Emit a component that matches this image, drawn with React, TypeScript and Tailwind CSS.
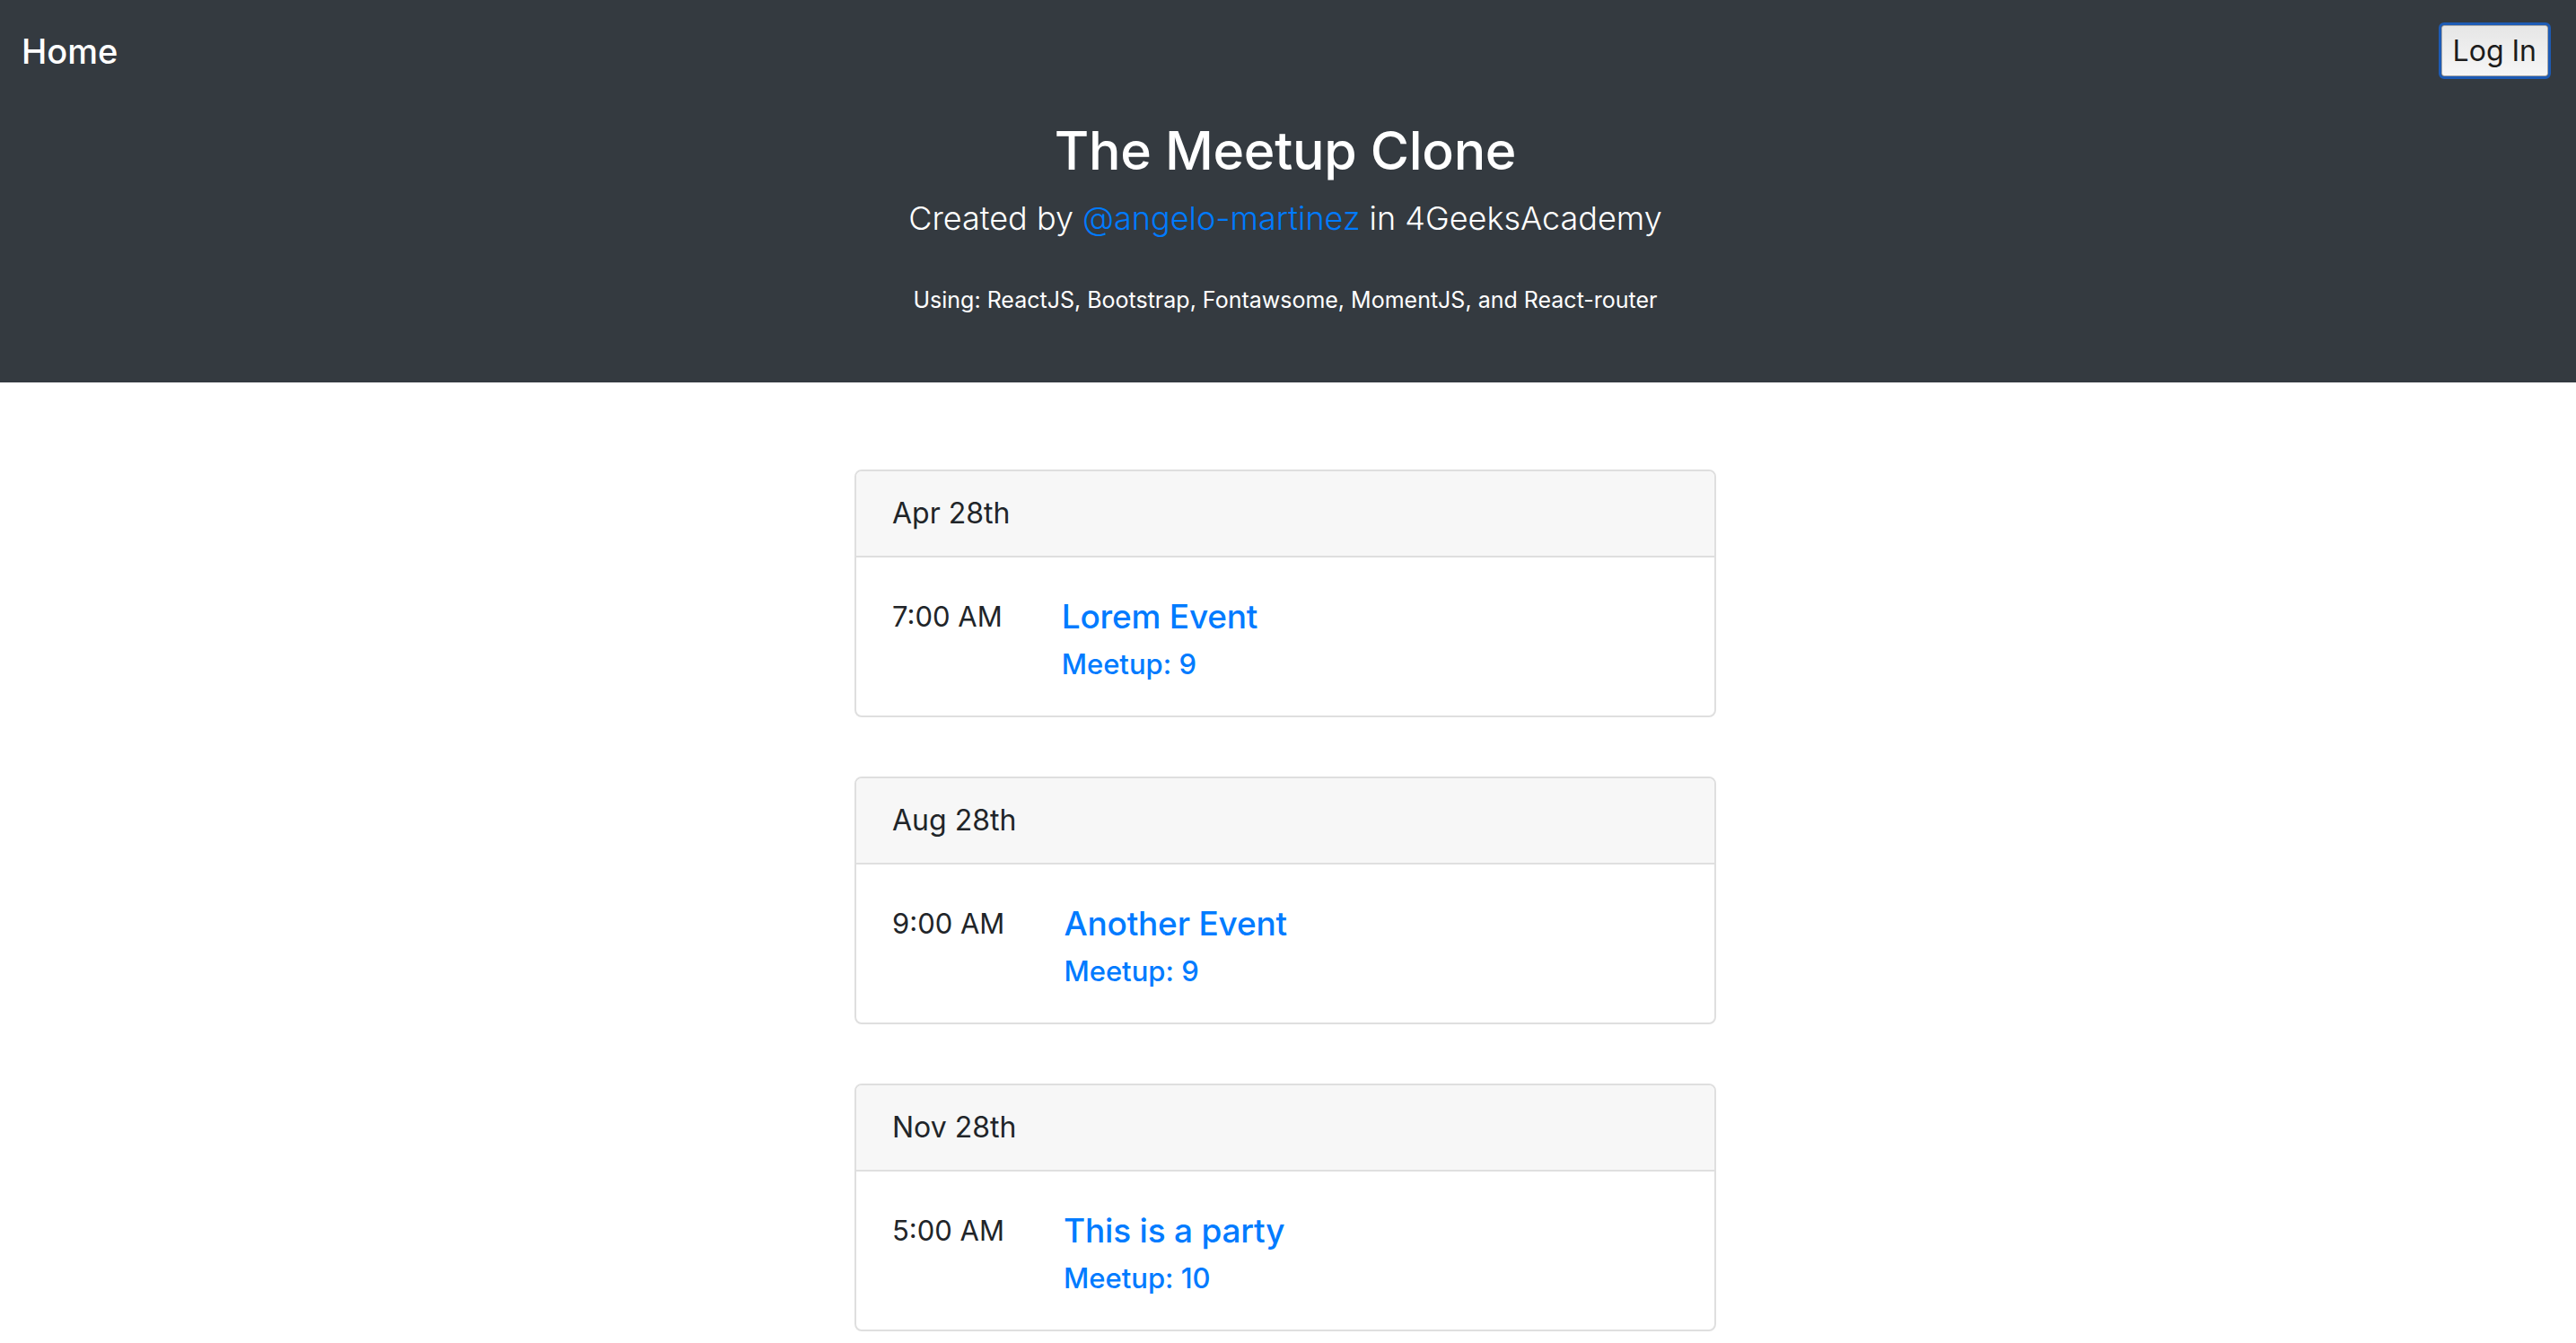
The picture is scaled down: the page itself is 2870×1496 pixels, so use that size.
import React from "react";

const events = [
  { id: 1, date: "Apr 28th", time: "7:00 AM", title: "Lorem Event", meetup: 9 },
  { id: 2, date: "Aug 28th", time: "9:00 AM", title: "Another Event", meetup: 9 },
  { id: 3, date: "Nov 28th", time: "5:00 AM", title: "This is a party", meetup: 10 },
];

function EventCard({ date, time, title, meetup }: { date: string; time: string; title: string; meetup: number }) {
  return (
    <div className="w-[960px] rounded-[8px] border-2 border-[#dfdfdf] bg-white overflow-hidden">
      <div className="border-b-2 border-[#dfdfdf] bg-[#f7f7f7] px-[40px] py-[23px] text-[32px] leading-[48px] text-[#212529]">
        {date}
      </div>
      <div className="flex px-[40px] pt-[42px] pb-[38px]">
        <div className="mr-[66px] text-[31px] leading-[48px] text-[#212529]">{time}</div>
        <div className="flex flex-col">
          <a href="#" className="mb-[10px] text-[37px] font-medium leading-[48px] tracking-[-0.2px] text-[#007bff]">
            {title}
          </a>
          <a href="#" className="text-[31px] font-medium leading-[38px] text-[#007bff]">
            Meetup: {meetup}
          </a>
        </div>
      </div>
    </div>
  );
}

export default function App() {
  return (
    <div className="min-h-screen bg-white font-['Inter','Liberation_Sans',sans-serif]">
      <header className="h-[426px] bg-[#343a40] text-white">
        <nav className="flex items-center justify-between pl-[24px] pr-[28px] pt-[25px]">
          <a href="#" className="text-[38px] font-medium leading-[56px] text-white">
            Home
          </a>
          <button className="rounded-[6px] border-[3px] border-[#1d5bb5] p-0">
            <span className="block rounded-[3px] border border-[#a7a7a7] bg-gradient-to-b from-[#e6e6e6] to-[#f6f6f6] px-[12px] text-[32px] leading-[55px] text-[#1c1c1c]">
              Log In
            </span>
          </button>
        </nav>
        <div className="flex flex-col items-center pr-[6px]">
          <h1 className="mt-[41px] text-[59px] font-medium leading-[77px] tracking-[-0.3px]">The Meetup Clone</h1>
          <p className="mt-[10px] text-[36px] font-light leading-[54px]">
            Created by <a href="#" className="text-[#007bff]">@angelo-martinez</a> in 4GeeksAcademy
          </p>
          <p className="mt-[46px] text-[25px] leading-[36px]">
            Using: ReactJS, Bootstrap, Fontawsome, MomentJS, and React-router
          </p>
        </div>
      </header>
      <main className="flex flex-col items-center gap-[66px] pt-[97px] pb-[66px] pr-[6px]">
        {events.map((e) => (
          <EventCard key={e.id} date={e.date} time={e.time} title={e.title} meetup={e.meetup} />
        ))}
      </main>
    </div>
  );
}
